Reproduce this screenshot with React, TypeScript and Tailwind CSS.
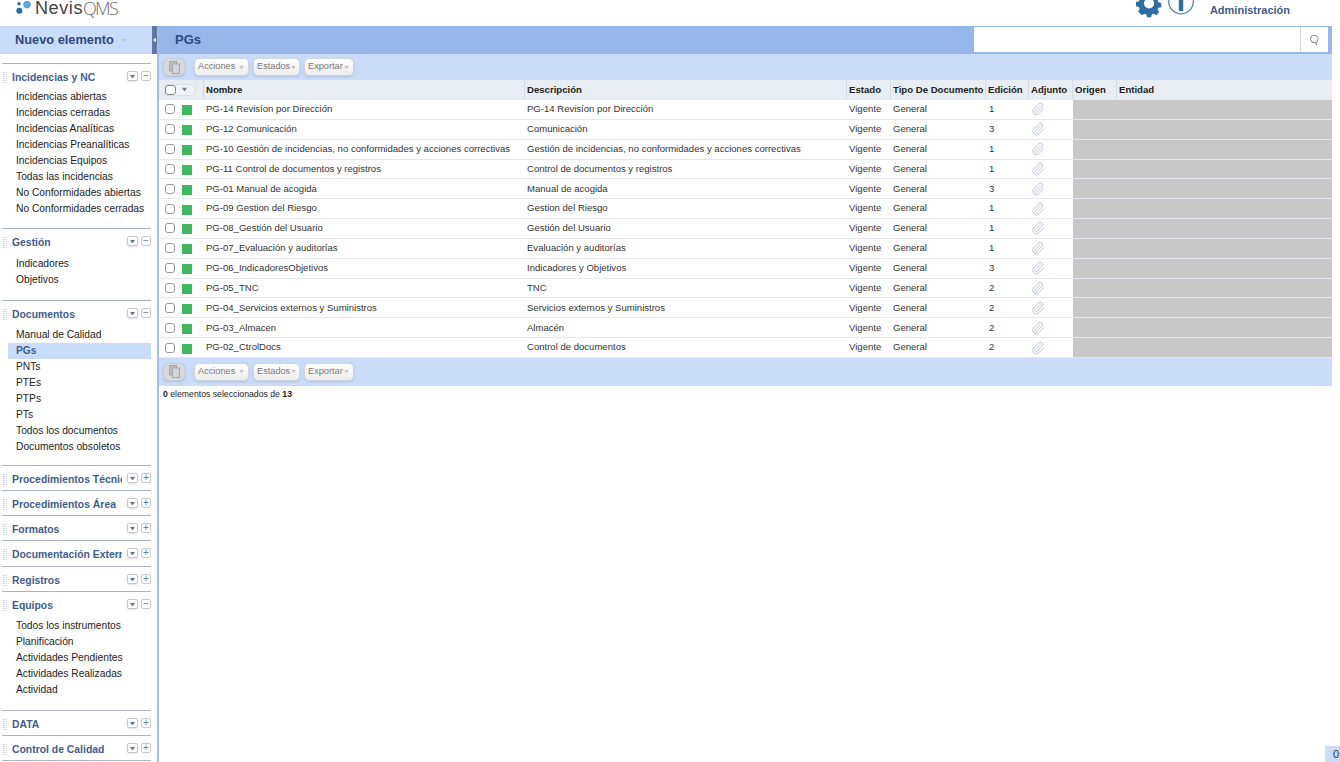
import { Paperclip, Search } from "lucide-react";

const font = { fontFamily: '"Liberation Sans", Arial, sans-serif' };

type Section = { title: string; open: boolean; items?: string[]; gap?: string };
const sections: Section[] = [
  { title: "Incidencias y NC", open: true, gap: "pt-[1px] pb-[11px]", items: ["Incidencias abiertas", "Incidencias cerradas", "Incidencias Analíticas", "Incidencias Preanalíticas", "Incidencias Equipos", "Todas las incidencias", "No Conformidades abiertas", "No Conformidades cerradas"] },
  { title: "Gestión", open: true, gap: "pt-[3px] pb-[12px]", items: ["Indicadores", "Objetivos"] },
  { title: "Documentos", open: true, gap: "pt-[2px] pb-[10px]", items: ["Manual de Calidad", "PGs", "PNTs", "PTEs", "PTPs", "PTs", "Todos los documentos", "Documentos obsoletos"] },
  { title: "Procedimientos Técnicos", open: false },
  { title: "Procedimientos Área", open: false },
  { title: "Formatos", open: false },
  { title: "Documentación Externa", open: false, gap: "pb-[1px]" },
  { title: "Registros", open: false },
  { title: "Equipos", open: true, gap: "pt-[2px] pb-[12px]", items: ["Todos los instrumentos", "Planificación", "Actividades Pendientes", "Actividades Realizadas", "Actividad"] },
  { title: "DATA", open: false },
  { title: "Control de Calidad", open: false },
];

const rows: [string, string, number][] = [
  ["PG-14 Revisíon por Dirección", "PG-14 Revisíon por Dirección", 1],
  ["PG-12 Comunicación", "Comunicación", 3],
  ["PG-10 Gestión de incidencias, no conformidades y acciones correctivas", "Gestión de incidencias, no conformidades y acciones correctivas", 1],
  ["PG-11 Control de documentos y registros", "Control de documentos y registros", 1],
  ["PG-01 Manual de acogida", "Manual de acogida", 3],
  ["PG-09 Gestion del Riesgo", "Gestion del Riesgo", 1],
  ["PG-08_Gestión del Usuario", "Gestión del Usuario", 1],
  ["PG-07_Evaluación y auditorías", "Evaluación y auditorías", 1],
  ["PG-06_IndicadoresObjetivos", "Indicadores y Objetivos", 3],
  ["PG-05_TNC", "TNC", 2],
  ["PG-04_Servicios externos y Suministros", "Servicios externos y Suministros", 2],
  ["PG-03_Almacen", "Almacén", 2],
  ["PG-02_CtrolDocs", "Control de documentos", 2],
];

const cols = "grid grid-cols-[45px_321px_322px_44px_95px_43px_44px_44px_1fr]";

function Caret({ className }: { className: string }) {
  return (
    <svg width="7" height="5" viewBox="0 0 7 5" className={className}>
      <path d="M0 0h7L3.5 5z" fill="currentColor" />
    </svg>
  );
}

function Grip() {
  return (
    <span className="w-[4px] h-[11px] ml-[3px] shrink-0 grid grid-cols-2 gap-x-px gap-y-px content-start">
      {Array.from({ length: 12 }).map((_, i) => (
        <span key={i} className="w-[1.5px] h-[1px] bg-[#d0d4da]" />
      ))}
    </span>
  );
}

function SideSection({ s }: { s: Section }) {
  return (
    <div className="ml-[2px] mr-[1px] border-t border-[#a9b5c6]">
      <div className="h-[24px] pt-[3px] flex items-center -ml-[2px]">
        <Grip />
        <span className="ml-[5px] w-[110px] overflow-hidden whitespace-nowrap font-bold text-[10.4px] text-[#3f5c8e]">{s.title}</span>
        <span className="w-[11px] h-[10px] ml-[5px] -mt-[3px] shrink-0 flex items-center justify-center rounded-[2px] border border-[#c8c8c8] shadow-sm">
          <Caret className="text-[#5d7396] scale-75" />
        </span>
        <span className="w-[10px] h-[10px] ml-[3px] -mt-[3px] shrink-0 flex items-center justify-center rounded-[2px] border border-[#c8c8c8] text-[#6b7b92] text-[10px] leading-none">
          {s.open ? "−" : "+"}
        </span>
      </div>
      {s.gap && (
        <div className={s.gap}>
          {(s.items ?? []).map((it) => (
            <div
              key={it}
              className={
                it === "PGs"
                  ? "h-[16px] ml-[6px] pl-[8px] flex items-center whitespace-nowrap text-[10.2px] font-bold text-[#3f5c8e] bg-[#c9dcfc]"
                  : "h-[16px] pl-[14px] flex items-center whitespace-nowrap text-[10.25px] text-[#222]"
              }
            >
              {it}
            </div>
          ))}
        </div>
      )}
    </div>
  );
}

function Btn({ label, w, caret }: { label: string; w: string; caret: string }) {
  return (
    <span className={`${w} h-[18px] flex items-center pl-[3px] rounded-[5px] border border-[#d2d6dc] bg-gradient-to-b from-white to-[#ececec] shadow-sm text-[9.2px] text-[#7a7a7a]`}>
      {label}
      <Caret className={`text-[#c4c4c4] scale-[0.7] ${caret}`} />
    </span>
  );
}

function Toolbar({ h }: { h: string }) {
  return (
    <div className={`${h} bg-[#cbdcfb] flex items-center pl-[4px]`}>
      <span className="w-[22px] h-[18px] flex items-center justify-center rounded-[5px] border border-[#c9cdd3] bg-[#d8d9db] shadow-sm">
        <svg width="11" height="13" viewBox="0 0 11 13">
          <rect x="0.500" y="0.500" width="7" height="9.500" fill="#b9bbbe" stroke="#a6a8ab" />
          <rect x="3.500" y="3" width="7" height="9.500" fill="#d4d5d7" stroke="#a6a8ab" />
        </svg>
      </span>
      <div className="ml-[9px] flex gap-[4px]">
        <Btn label="Acciones" w="w-[55px]" caret="ml-[3px]" />
        <Btn label="Estados" w="w-[47px]" caret="ml-0" />
        <Btn label="Exportar" w="w-[50px]" caret="ml-0" />
      </div>
    </div>
  );
}

export default function App() {
  const th = "h-full flex items-center pl-[2px] font-bold text-[9.6px] text-[#222] border-r border-[#d6dbe3] whitespace-nowrap overflow-hidden";
  const td = "h-full flex items-center pl-[2px] text-[9.55px] text-[#333] whitespace-nowrap overflow-hidden";
  return (
    <div style={font} className="relative w-[1340px] h-[762px] overflow-hidden bg-white flex flex-col">
      <header className="h-[26px] shrink-0 flex overflow-hidden">
        <div className="ml-[16px] mt-[1px] flex items-start">
          <svg width="16" height="14" viewBox="0 0 16 14">
            <circle cx="11" cy="3.600" r="3.800" fill="#5ca6dc" />
            <circle cx="3" cy="2.700" r="1.700" fill="#2c6aa6" />
            <circle cx="3.300" cy="9.800" r="3" fill="#2c6aa6" />
          </svg>
          <span className="ml-[3px] text-[18px] tracking-[0.6px] text-[#444] leading-[15px]">Nevis</span>
          <span className="text-[18px] tracking-[-1.7px] text-[#6a6a6a] leading-[15px]" style={{ fontFamily: '"Open Sans", sans-serif', fontWeight: 300 }}>QMS</span>
        </div>
        <div className="ml-auto mr-[50px] flex items-start">
          <svg width="26" height="26" viewBox="0 0 26 26" className="-mt-[7px]">
            <path fill="#2f6ea3" fillRule="evenodd" d="M10.500 1h5l.7 3.300 2.300 1 2.900-1.800 3.500 3.500-1.800 2.900 1 2.300 3.300.7v5l-3.300.7-1 2.300 1.800 2.900-3.500 3.500-2.900-1.800-2.300 1-.7 3.300h-5l-.7-3.300-2.300-1-2.900 1.800L.1 22.800l1.800-2.900-1-2.300-3.300-.7v-5l3.300-.7 1-2.300L.1 7l3.500-3.500 2.900 1.800 2.300-1zM13 7.500a6 6 0 1 0 0 12 6 6 0 0 0 0-12z" transform="translate(2 -1) scale(.85)" />
          </svg>
          <svg width="26" height="28" viewBox="0 0 26 28" className="ml-[6px] -mt-[13px]">
            <circle cx="13" cy="14.500" r="12.300" fill="none" stroke="#3f80b5" strokeWidth="1.200" />
            <rect x="10.800" y="8" width="4.400" height="16" fill="#2f6ea3" />
          </svg>
          <span className="ml-[16px] mt-[4px] font-bold text-[11px] text-[#3f5c8e] leading-[13px]">Administración</span>
        </div>
      </header>

      <div className="flex-1 flex min-h-0">
        <aside className="w-[159px] shrink-0 border-r-[2px] border-[#a3bde2]">
          <div className="flex h-[28px]">
            <div className="w-[152px] bg-[#c9dcfc] flex items-center pl-[15px] font-bold text-[12.8px] text-[#2f4a7c]">
              Nuevo elemento
              <Caret className="ml-[7px] text-[#b4c2d8] scale-[0.7]" />
            </div>
            <div className="w-[5px] bg-[#5d78a6] flex items-center justify-center">
              <span className="w-0 h-0 border-y-[2px] border-y-transparent border-r-[3px] border-r-white" />
            </div>
          </div>
          <div className="w-[152px] mt-[9px]">
            {sections.map((s) => (
              <SideSection key={s.title} s={s} />
            ))}
            <div className="ml-[2px] mr-[1px] border-t border-[#a9b5c6]" />
          </div>
        </aside>

        <main className="flex-1 min-w-0 pr-[8px]">
          <div className="h-[28px] bg-[#95b7ea] flex items-center pl-[16px] pb-[1px]">
            <span className="font-bold text-[13px] text-[#2f4a7c]">PGs</span>
            <div className="ml-auto mr-[4px] w-[354px] h-[25px] mt-[-1px] bg-white flex">
              <div className="flex-1" />
              <div className="w-[28px] border-l border-[#d8d8d8] flex items-center justify-center">
                <Search size={11} className="text-[#777] rotate-[25deg]" strokeWidth={2} />
              </div>
            </div>
          </div>
          <Toolbar h="h-[26px]" />
          <div className={`${cols} h-[20px] bg-[#e8edf3] items-center`}>
            <div className="h-full flex items-center pl-[5px] border-r border-[#d6dbe3]">
              <span className="w-[31px] h-[12px] -mt-[1px] flex items-center rounded-[2px] border border-[#dcdfe4] bg-[#f1f3f6]">
                <span className="w-[11px] h-[10px] rounded-[3px] border border-[#8a8a8a] bg-white" />
                <Caret className="ml-[5px] text-[#6b7fa0] scale-[0.8]" />
              </span>
            </div>
            <div className={th}>Nombre</div>
            <div className={th}>Descripción</div>
            <div className={th}>Estado</div>
            <div className={th}>Tipo De Documento</div>
            <div className={th}>Edición</div>
            <div className={th}>Adjunto</div>
            <div className={th}>Origen</div>
            <div className={`${th} border-r-0`}>Entidad</div>
          </div>
          {rows.map(([n, d, e]) => (
            <div key={n} className={`${cols} h-[19.85px] border-b border-[#e4e8ee]`}>
              <div className="h-full flex items-center pl-[6px]">
                <span className="w-[10px] h-[10px] rounded-[3px] border border-[#999] bg-white" />
                <span className="ml-[7px] mt-[2px] w-[10px] h-[10px] bg-[#3fb95f]" />
              </div>
              <div className={td}>{n}</div>
              <div className={td}>{d}</div>
              <div className={td}>Vigente</div>
              <div className={td}>General</div>
              <div className={`${td} pl-[3px]`}>{e}</div>
              <div className="h-full flex items-center pl-[2px]">
                <Paperclip size={14} strokeWidth={1.3} className="text-[#a4b3c8]" />
              </div>
              <div className="h-full bg-[#c8c8c8] col-span-2" />
            </div>
          ))}
          <Toolbar h="h-[28px]" />
          <div className="mt-[3px] h-[12px] flex items-center pl-[4px] text-[8.7px] text-[#222]">
            <b>0</b>&nbsp;elementos seleccionados de&nbsp;<b>13</b>
          </div>
        </main>
      </div>

      <div className="absolute right-0 bottom-0 w-[15px] h-[16px] pr-[1px] bg-[#cbdcfb] flex items-center justify-end text-[11px] text-[#333]">0</div>
    </div>
  );
}
